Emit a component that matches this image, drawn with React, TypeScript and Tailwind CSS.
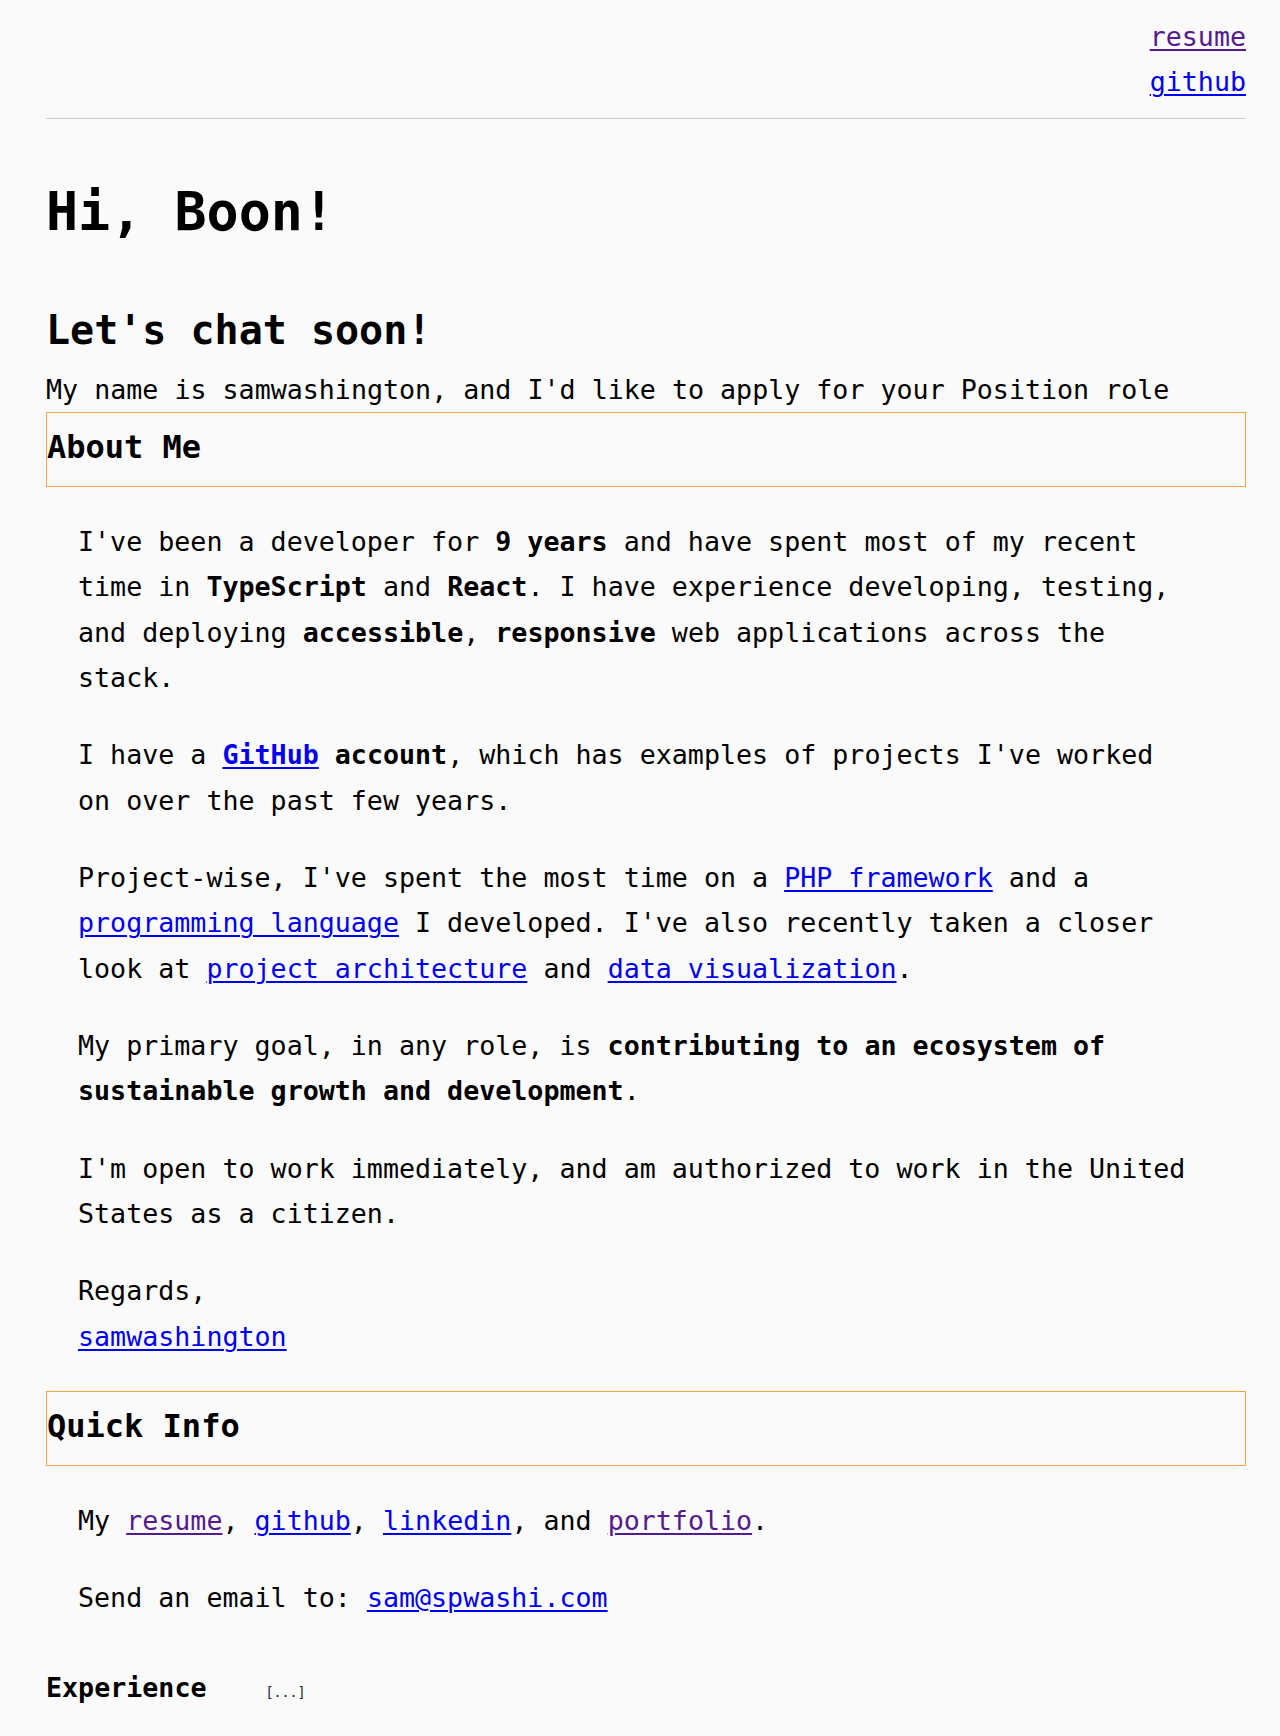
import React from "react";

const visited = "text-[#551a8b] underline decoration-[1.5px] underline-offset-[3px]";
const link = "text-[#0000ee] underline decoration-[1.5px] underline-offset-[3px]";

function SectionBox({ title }: { title: string }) {
  return (
    <div className="border border-[#eda64c]">
      <h3 className="text-[32px] leading-[54px] font-bold pt-[7px] pb-[12px]">{title}</h3>
    </div>
  );
}

export default function App() {
  return (
    <div className="min-h-screen bg-[#fafafa] text-black font-['DejaVu_Sans_Mono',monospace] text-[26.67px] leading-[45.33px]">
      <div className="pl-[46px] pr-[34px]">
        <nav className="pt-[14px] flex flex-col items-end">
          <a href="#resume" className={visited}>resume</a>
          <a href="#github" className={link}>github</a>
        </nav>
        <hr className="mt-[13px] border-t border-[#cfcfcf]" />

        <h1 className="mt-[61px] text-[53.33px] leading-[64px] font-bold">Hi, Boon!</h1>
        <h2 className="mt-[62px] text-[40px] leading-[48px] font-bold">Let's chat soon!</h2>
        <p className="mt-[13px]">My name is samwashington, and I'd like to apply for your Position role</p>

        <SectionBox title="About Me" />
        <div className="pl-[32px]">
          <p className="mt-[32px] max-w-[1116px]">
            I've been a developer for <b>9 years</b> and have spent most of my recent time in{" "}
            <b>TypeScript</b> and <b>React</b>. I have experience developing, testing, and deploying{" "}
            <b>accessible</b>, <b>responsive</b> web applications across the stack.
          </p>
          <p className="mt-[32px] max-w-[1116px]">
            I have a{" "}
            <b>
              <a href="#gh" className={link}>GitHub</a> account
            </b>
            , which has examples of projects I've worked on over the past few years.
          </p>
          <p className="mt-[32px] max-w-[1116px]">
            Project-wise, I've spent the most time on a <a href="#php" className={link}>PHP framework</a> and a{" "}
            <a href="#lang" className={link}>programming language</a> I developed. I've also recently taken a closer
            look at <a href="#arch" className={link}>project architecture</a> and{" "}
            <a href="#dataviz" className={link}>data visualization</a>.
          </p>
          <p className="mt-[32px] max-w-[1116px]">
            My primary goal, in any role, is <b>contributing to an ecosystem of sustainable growth and development</b>.
          </p>
          <p className="mt-[32px] max-w-[1116px]">
            I'm open to work immediately, and am authorized to work in the United States as a citizen.
          </p>
          <p className="mt-[32px] max-w-[1116px]">
            Regards,
            <br />
            <a href="#me" className={link}>samwashington</a>
          </p>
        </div>

        <div className="mt-[32px]">
          <SectionBox title="Quick Info" />
        </div>
        <div className="pl-[32px]">
          <p className="mt-[32px] max-w-[1116px]">
            My <a href="#r" className={visited}>resume</a>, <a href="#g" className={link}>github</a>,{" "}
            <a href="#l" className={link}>linkedin</a>, and <a href="#p" className={visited}>portfolio</a>.
          </p>
          <p className="mt-[32px] max-w-[1116px]">
            Send an email to: <a href="#mail" className={link}>sam@spwashi.com</a>
          </p>
        </div>

        <div className="mt-[44px] flex items-baseline">
          <span className="font-bold">Experience</span>
          <span className="ml-[59px] text-[13.33px] text-[#222]">[...]</span>
        </div>
      </div>
    </div>
  );
}
